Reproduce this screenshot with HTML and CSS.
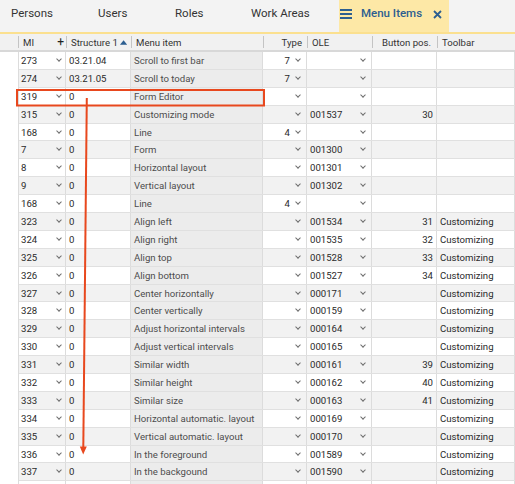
FILE: index.html
```html
<!DOCTYPE html>
<html lang="en">
<head>
    <meta charset="UTF-8">
    <title>Menu Items</title>
    <link rel="stylesheet" href="styles.css">
</head>
<body>
<div class="page">
    <div class="tabs">
        <div class="tab tab-persons">Persons</div>
        <div class="tab tab-users">Users</div>
        <div class="tab tab-roles">Roles</div>
        <div class="tab tab-areas">Work Areas</div>
        <div class="tab tab-active">
            <svg class="tab-icon" width="12" height="10" viewBox="0 0 12 10">
                <path d="M0 1h12M0 5h12M0 9h12" stroke="#2c5e90" stroke-width="1.8"/>
            </svg>
            <span class="tab-title">Menu Items</span>
            <svg class="tab-close" width="9" height="9" viewBox="0 0 9 9">
                <path d="M1 1l7 7M8 1l-7 7" stroke="#2c5e90" stroke-width="1.8"/>
            </svg>
        </div>
    </div>

    <div class="grid-head">
        <div class="hcell hcell-gap"></div>
        <div class="hcell hcell-mi"><span>MI</span><span class="plus">+</span></div>
        <div class="hcell">Structure 1
            <svg class="sort" width="8" height="5" viewBox="0 0 8 5"><path d="M0 5L4 0L8 5z" fill="#2c5e90"/></svg>
        </div>
        <div class="hcell">Menu item</div>
        <div class="hcell hcell-num">Type</div>
        <div class="hcell">OLE</div>
        <div class="hcell hcell-num hcell-btn">Button pos.</div>
        <div class="hcell">Toolbar</div>
    </div>

    <div id="gridBody" class="grid-body"></div>

    <svg class="annotation" width="515" height="484" viewBox="0 0 515 484">
        <rect x="17" y="90" width="247" height="15.5" fill="none" stroke="#e8481e" stroke-width="2"/>
        <path d="M86.8 98L83.3 447" stroke="#e8481e" stroke-width="2"/>
        <path d="M79.8 446.5L86.8 446.5L83.2 454.5z" fill="#e8481e"/>
    </svg>
</div>

<script>
    // MI, Structure, Menu item, Type, OLE, Button pos., Toolbar
    const rows = [
        ['273', '03.21.04', 'Scroll to first bar', '7', '', '', ''],
        ['274', '03.21.05', 'Scroll to today', '7', '', '', ''],
        ['319', '0', 'Form Editor', '', '', '', ''],
        ['315', '0', 'Customizing mode', '', '001537', '30', ''],
        ['168', '0', 'Line', '4', '', '', ''],
        ['7', '0', 'Form', '', '001300', '', ''],
        ['8', '0', 'Horizontal layout', '', '001301', '', ''],
        ['9', '0', 'Vertical layout', '', '001302', '', ''],
        ['168', '0', 'Line', '4', '', '', ''],
        ['323', '0', 'Align left', '', '001534', '31', 'Customizing'],
        ['324', '0', 'Align right', '', '001535', '32', 'Customizing'],
        ['325', '0', 'Align top', '', '001528', '33', 'Customizing'],
        ['326', '0', 'Align bottom', '', '001527', '34', 'Customizing'],
        ['327', '0', 'Center horizontally', '', '000171', '', 'Customizing'],
        ['328', '0', 'Center vertically', '', '000159', '', 'Customizing'],
        ['329', '0', 'Adjust horizontal intervals', '', '000164', '', 'Customizing'],
        ['330', '0', 'Adjust vertical intervals', '', '000165', '', 'Customizing'],
        ['331', '0', 'Similar width', '', '000161', '39', 'Customizing'],
        ['332', '0', 'Similar height', '', '000162', '40', 'Customizing'],
        ['333', '0', 'Similar size', '', '000163', '41', 'Customizing'],
        ['334', '0', 'Horizontal automatic. layout', '', '000169', '', 'Customizing'],
        ['335', '0', 'Vertical automatic. layout', '', '000170', '', 'Customizing'],
        ['336', '0', 'In the foreground', '', '001589', '', 'Customizing'],
        ['337', '0', 'In the backgound', '', '001590', '', 'Customizing'],
        ['', '', '', '', '', '', '']
    ];

    const gridBody = document.getElementById('gridBody');

    function cell(cls, html) {
        return `<div class="cell ${cls}">${html}</div>`;
    }

    function drop(value) {
        return `<span>${value}</span><i class="chev"></i>`;
    }

    gridBody.innerHTML = rows.map(r => `
        <div class="row">
            ${cell('cell-drop', drop(r[0]))}
            ${cell('', r[1])}
            ${cell('cell-ro', r[2])}
            ${cell('cell-drop cell-type', drop(r[3]))}
            ${cell('cell-drop', drop(r[4]))}
            ${cell('cell-num', r[5])}
            ${cell('', r[6])}
        </div>`).join('');
</script>
</body>
</html>
```

FILE: styles.css
```css
* {
    box-sizing: border-box;
    margin: 0;
    padding: 0;
}

body, html {
    width: 515px;
    height: 484px;
    overflow: hidden;
    background-color: #fff;
    font-family: Roboto, "Liberation Sans", sans-serif;
}

.page {
    position: relative;
    height: 100%;
}

/* tab strip */

.tabs {
    display: flex;
    height: 34px;
    background-color: #f3f3f3;
    border-bottom: 2px solid #fbe08f;
}

.tab {
    flex: none;
    height: 32px;
    padding-top: 6px;
    font-size: 11.5px;
    line-height: 14px;
    color: #333;
}

.tab-persons {
    width: 98px;
    padding-left: 11px;
}

.tab-users {
    width: 77px;
}

.tab-roles {
    width: 76px;
}

.tab-areas {
    width: 88px;
}

.tab-active {
    display: flex;
    align-items: flex-start;
    width: 110px;
    padding-left: 1px;
    background-color: #fde8a6;
    color: #2c5e90;
    font-weight: 500;
}

.tab-icon {
    margin-top: 3px;
}

.tab-title {
    margin-left: 9px;
}

.tab-close {
    margin: 4px 0 0 11px;
}

/* grid header */

.grid-head {
    display: grid;
    grid-template-columns: 18px 48px 65px 132px 44px 65px 65px 1fr;
    align-items: center;
    height: 18px;
    background-color: #f1f1f1;
    border-bottom: 2px solid #d8d8d8;
    font-size: 9.6px;
    color: #333;
}

.hcell {
    display: flex;
    align-items: center;
    height: 12px;
    padding: 0 4px;
    border-left: 1px solid #c4c4c4;
    white-space: nowrap;
}

.hcell-gap {
    border-left: none;
}

.hcell-mi {
    justify-content: space-between;
    padding-right: 2px;
}

.plus {
    font-size: 12px;
    color: #222;
}

.sort {
    margin-left: 2px;
}

.hcell-num {
    justify-content: flex-end;
    padding-right: 5px;
}

.hcell-btn {
    padding-right: 6px;
}

/* grid body */

.grid-body {
    margin-left: 18px;
    border-left: 1px solid #dcdcdc;
}

.row {
    display: grid;
    grid-template-columns: 47px 65px 132px 44px 65px 65px 1fr;
    height: 17.9px;
    border-bottom: 1px solid #e0e0e0;
    font-size: 9.6px;
    color: #2a2a2a;
}

.row:nth-child(even) {
    background-color: #f2f2f2;
}

.cell {
    display: flex;
    align-items: center;
    padding: 0 3px;
    border-right: 1px solid #dcdcdc;
    white-space: nowrap;
    overflow: hidden;
}

.cell-ro {
    background-color: #ececec;
    color: #4d4d4d;
}

.cell-drop {
    justify-content: space-between;
    padding-right: 6px;
}

.cell-drop:first-child {
    padding-left: 2px;
    padding-right: 4px;
}

.cell-type {
    justify-content: flex-end;
    gap: 6px;
}

.cell-num {
    justify-content: flex-end;
}

.chev {
    display: block;
    width: 4px;
    height: 4px;
    margin-top: -3px;
    border-right: 1.4px solid #6e6e6e;
    border-bottom: 1.4px solid #6e6e6e;
    transform: rotate(45deg);
}

/* red marker drawn over the grid */

.annotation {
    position: absolute;
    left: 0;
    top: 0;
    pointer-events: none;
}
```
